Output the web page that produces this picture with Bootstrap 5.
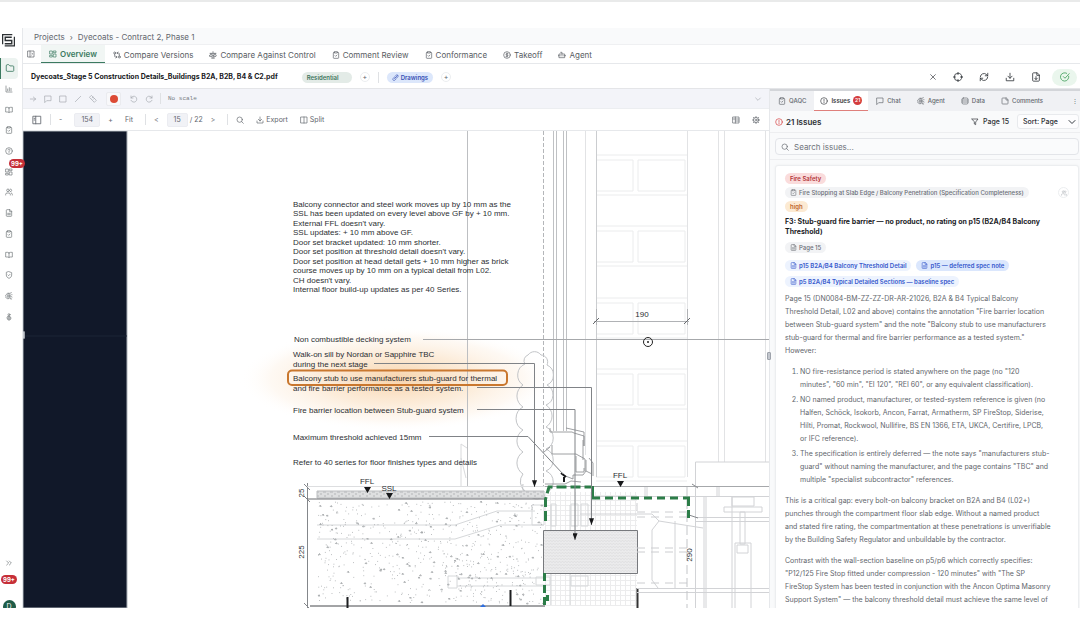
<!DOCTYPE html>
<html lang="en">
<head>
<meta charset="utf-8">
<meta name="viewport" content="width=device-width, initial-scale=1">
<title>Dyecoats - Contract 2, Phase 1</title>
<link href="https://cdn.jsdelivr.net/npm/bootstrap@5.3.0/dist/css/bootstrap.min.css" rel="stylesheet">
<style>
:root{--ink:#18191c;--soft:#62666d;--line:#e6e8eb;--pale:#f9fafb;--tool:#f3f4f9;--green:#3b7a60;--red:#d43d3d}
body{font-family:Inter,"Open Sans",sans-serif;font-size:7px;line-height:10px;color:var(--soft);background:#fff;border-top:2px solid #e9eaea}
button,input,select{font:inherit;color:inherit}
button{background:none;border:0;padding:0}
a{color:inherit;text-decoration:none}
.ic{width:8px;height:8px;flex:none;fill:none;stroke:currentColor;stroke-width:2;stroke-linecap:round;stroke-linejoin:round;display:block}
.ic-lg{width:10px;height:10px}
.shell{height:calc(100vh - 24px);padding-top:26px}
.crumbs,.tabs,.titlebar,.tools,.view,.stabs,.ihead,.find{flex:none}
.rail{width:22px;flex:none;color:#6d7276;position:relative;z-index:1;overflow-x:visible;overflow-y:clip;padding-top:6px}
.rail-logo{width:13px;height:13px;flex:none;margin:0 0 11px 2px}
.rail-nav{height:269px}
.rail-nav a{flex:1;width:18px;display:flex;align-items:center;justify-content:center;position:relative}
.rail-nav .on{background:#ecf3f0;border-left:1px solid var(--green);color:var(--green);border-radius:0 4px 4px 0}
.rail-foot{width:18px;margin-bottom:-5px}
.pill-red{background:#c62f38;color:#fff;border-radius:6px;font-size:6px;line-height:9px;font-weight:700;padding:0 2px}
.pill-over{position:absolute;left:9px;top:-2px}
.avatar{width:13px;height:13px;border-radius:50%;background:#1f5c48;color:#fff;line-height:13px;text-align:center}
.main{border-left:1px solid var(--line)}
.crumbs{height:17px;background:var(--pale);border-bottom:1px solid #eff0f2;padding:1px 0 0 11px;font-size:8px;gap:5px}
.tabs{height:19px;border-bottom:1px solid var(--line);padding-left:4px;font-size:8px;color:#585c62}
.tabs .tb{padding:1px 8px 0;gap:3px;height:18px;display:flex;align-items:center}
.tabs .on{background:#f1f6f4;color:var(--green);font-weight:600;border-bottom:1px solid var(--green);margin-left:6px}
.titlebar{height:25px;padding:2px 3px 0 8px;border-bottom:1px solid #e4e5e8}
.titlebar h1{font-size:7px;line-height:10px;font-weight:700;color:var(--ink);margin:0 16px 0 0}
.chip{border-radius:8px;font-size:6px;line-height:11px;padding:0 5px;font-weight:600;display:inline-flex;align-items:center;gap:2px;white-space:nowrap}
.chip .ic{width:7px;height:7px}
.chip-res{background:#e3ebe7;color:#3f765e;width:50px}
.chip-draw{background:#dce7fb;color:#3450b5}
.plus{width:10px;height:10px;border:1px solid #eceef0;border-radius:50%;line-height:8px;text-align:center}
.vr1{width:1px;height:11px;background:#dfe1e4;flex:none}
.actions{gap:16px;color:#33373c}
.okbtn{width:25px;height:17px;margin-left:-5px;border-radius:9px;background:#eaf6ed;color:#43a05d;display:flex;align-items:center;justify-content:center}
.tools{height:20px;background:var(--tool);border-bottom:1px solid #eceef1;color:#a3a7ae;padding:0 7px 0 6px;gap:7px}
.tools .rec{width:15px;height:14px;margin:0 2px;background:#f8f8fa;border:1px solid #eaebef;border-radius:2px;display:flex;align-items:center;justify-content:center}
.tools .rec::before{content:"";width:8px;height:8px;border-radius:50%;background:#dc4a35}
.mono{font-family:"Liberation Mono",monospace;font-size:6px;color:#777b82}
.view{height:22px;border-bottom:1px solid var(--line);padding:0 9px;white-space:nowrap}
.pair{display:flex;align-items:center;gap:2px}
.box{background:#f1f2f6;border:1px solid #ebecf1;border-radius:2px;height:14px;text-align:center;padding:0}
.box-zoom{width:26px}.box-page{width:21px}
.stage{flex:1;min-height:0;position:relative;overflow:hidden}
.stage svg.sheet{display:block;width:100%;height:100%}
.grip{position:absolute;width:4px;height:8px;background:#c3c7ce;border:1px solid #9ea3ab;border-radius:1px}
.grip-l{left:-2px;top:42%}.grip-r{left:-3px;top:56%;margin-top:-28px}
.side{width:311px;flex:none;border-left:1px solid var(--line);background:var(--pale);min-height:0}
.stabs{height:22px;background:#f0f1f4;border-top:2px solid #d3d5d9;padding-right:2px;font-size:6px;font-weight:500;white-space:nowrap}
.stabs .tb{display:flex;align-items:center;gap:3px;height:20px;padding:0 8px}
.stabs .on{background:#fff;color:#3b3e43;font-weight:600;border-bottom:1px solid #df7f7b;padding:0 6px}
.count{background:var(--red);color:#fff;width:9px;height:9px;border-radius:50%;font-size:5px;line-height:9px;text-align:center}
.ihead{height:22px;border-bottom:1px solid #edeef0;padding:0 1px 0 5px;color:#2b2e33;font-weight:500}
.ihead h2{font-size:8px;line-height:10px;font-weight:600;margin:0}
.ihead .warn{color:#d43d3d;margin-right:3px}
.sort{width:62px;height:15px;font-size:7px;line-height:10px;padding:0 12px 0 5px;border:1px solid #e8eaed;border-radius:3px;background-color:#fdfdfe;background-position:right 2px center;background-size:8px;font-weight:500;color:#2b2e33}
.find{height:27px;border-bottom:1px solid #edeef0;padding:5px 1px 5px 5px}
.find .wrap{position:relative;height:17px}
.find .ic{position:absolute;left:6px;top:5px}
.find input{height:17px;min-height:0;font-size:8px;line-height:10px;padding:0 0 0 18px;border:1px solid #e3e5e9;border-radius:4px;background:#fafbfc;color:var(--soft)}
.find input::placeholder{color:#6f747b}
.feed{flex:1;min-height:0;overflow:hidden;padding:5px 1px 0 5px}
.issue{background:#fff;border:1px solid #eceef0;border-radius:3px;padding:7px 9px 20px;box-shadow:0 0 3px #0000000d;color:#62666c}
.issue .meta{display:flex;justify-content:space-between;margin-bottom:3px}
.issue h3{font-size:7px;line-height:10px;font-weight:700;color:#1b1c1f;margin:5px 15px 5px 0}
.issue .refs{display:flex;flex-wrap:wrap;gap:5px;margin:7px 0 5px}
.issue p{line-height:13px;margin:0 0 8px}
.issue ol{line-height:13px;padding-left:15px;margin:0 0 8px}
.issue li{margin-bottom:2px}
.c-red{background:#fadcdc;color:#b3353a}
.c-grey{background:#f2f3f5;color:#6a6e75;font-weight:500}
.c-amber{background:#fcead3;color:#c0672c}
.c-blue{background:#edf3fe;color:#3558cc}
.c-blue2{background:#dbe7fd;color:#3558cc}
.who{width:11px;height:11px;border:1px solid #eceef0;border-radius:50%;display:flex;align-items:center;justify-content:center;color:#a9adb2}
.who .ic{width:6px;height:6px}
.note{font-family:"Liberation Sans",Arial,sans-serif;font-size:8px;fill:#2c2f33}
</style>
</head>
<body>
<svg class="d-none" aria-hidden="true">
<symbol id="folder" viewBox="0 0 24 24"><path d="M3 6a2 2 0 0 1 2-2h4l3 3h7a2 2 0 0 1 2 2v9a2 2 0 0 1-2 2H5a2 2 0 0 1-2-2z"/></symbol>
<symbol id="chart" viewBox="0 0 24 24"><path d="M3 3v18h18M8 17v-5M13 17V8M18 17v-7"/></symbol>
<symbol id="book" viewBox="0 0 24 24"><path d="M12 6v14M12 6c-1-1-2-2-4-2H2v14h6c2 0 3 1 4 2 1-1 2-2 4-2h6V4h-6c-2 0-3 1-4 2z"/></symbol>
<symbol id="clip" viewBox="0 0 24 24"><path d="M8 4H6a2 2 0 0 0-2 2v14a2 2 0 0 0 2 2h12a2 2 0 0 0 2-2V6a2 2 0 0 0-2-2h-2M8 2h8v4H8zM9 14l2 2 4-4"/></symbol>
<symbol id="help" viewBox="0 0 24 24"><circle cx="12" cy="12" r="10"/><path d="M9 9a3 3 0 1 1 4 3c-1 .5-1 1-1 2M12 17v.1"/></symbol>
<symbol id="grid" viewBox="0 0 24 24"><path d="M3 3h7v9H3zM14 3h7v5h-7zM14 12h7v9h-7zM3 16h7v5H3z"/></symbol>
<symbol id="users" viewBox="0 0 24 24"><circle cx="9" cy="7" r="4"/><path d="M2 21v-2a4 4 0 0 1 4-4h6a4 4 0 0 1 4 4v2M16 3a4 4 0 0 1 0 8M22 21v-2a4 4 0 0 0-3-4"/></symbol>
<symbol id="file" viewBox="0 0 24 24"><path d="M14 2H6a2 2 0 0 0-2 2v16a2 2 0 0 0 2 2h12a2 2 0 0 0 2-2V8zM14 2v6h6M8 13h8M8 17h8"/></symbol>
<symbol id="fileup" viewBox="0 0 24 24"><path d="M14 2H6a2 2 0 0 0-2 2v16a2 2 0 0 0 2 2h12a2 2 0 0 0 2-2V8zM14 2v6h6M12 11v7M9 15l3 3 3-3"/></symbol>
<symbol id="note" viewBox="0 0 24 24"><path d="M15 3H5a2 2 0 0 0-2 2v14a2 2 0 0 0 2 2h14a2 2 0 0 0 2-2V9zM15 3v6h6"/></symbol>
<symbol id="shield" viewBox="0 0 24 24"><path d="M12 2l8 3v7c0 5-3 8-8 10-5-2-8-5-8-10V5zM9 12l2 2 4-4"/></symbol>
<symbol id="brain" viewBox="0 0 24 24"><path d="M11 4a4 4 0 0 0-6 3 4 4 0 0 0-2 6 4 4 0 0 0 3 6 4 4 0 0 0 5 1zM11 4h4l4-2M11 12h5M15 8v12l5 1M8 8v8M20 8h1M19 14l2 1"/></symbol>
<symbol id="worker" viewBox="0 0 24 24"><circle cx="12" cy="5" r="3"/><path d="M9 10h6l3 5a6 6 0 0 1-12 0zM8 15h8M12 10v11"/></symbol>
<symbol id="panel" viewBox="0 0 24 24"><path d="M3 3h18v18H3zM9 3v18M14 9l3 3-3 3"/></symbol>
<symbol id="split" viewBox="0 0 24 24"><path d="M3 3h18v18H3zM12 3v18"/></symbol>
<symbol id="side" viewBox="0 0 24 24"><path d="M3 3h18v18H3zM9 3v18M5 8h2M5 12h2"/></symbol>
<symbol id="table" viewBox="0 0 24 24"><path d="M3 3h18v18H3zM3 9h18M10 3v18M10 15h11"/></symbol>
<symbol id="compare" viewBox="0 0 24 24"><circle cx="5" cy="6" r="3"/><circle cx="19" cy="18" r="3"/><path d="M12 6h5a2 2 0 0 1 2 2v7M15 9l-3-3 3-3M12 18H7a2 2 0 0 1-2-2V9M9 15l3 3-3 3"/></symbol>
<symbol id="scale" viewBox="0 0 24 24"><path d="M12 2v20M7 21h10M3 7h18M2 15l4-8 4 8a5 5 0 0 1-8 0zM14 15l4-8 4 8a5 5 0 0 1-8 0z"/></symbol>
<symbol id="dollar" viewBox="0 0 24 24"><circle cx="12" cy="12" r="10"/><path d="M15 8h-4a2 2 0 0 0 0 4h2a2 2 0 0 1 0 4H9M12 6v12"/></symbol>
<symbol id="bot" viewBox="0 0 24 24"><path d="M4 9h16v11H4zM12 9V4H8M1 14h3M20 14h3M9 13v2M15 13v2"/></symbol>
<symbol id="link" viewBox="0 0 24 24"><path d="M10 14l9-9M8 11l-4 4a4 4 0 0 0 6 6l4-4M10 8l4-4a4 4 0 0 1 6 6l-4 4M9 16l6-6"/></symbol>
<symbol id="x" viewBox="0 0 24 24"><path d="M5 5l14 14M19 5L5 19"/></symbol>
<symbol id="target" viewBox="0 0 24 24"><circle cx="12" cy="12" r="9"/><path d="M12 1v5M12 18v5M1 12h5M18 12h5"/></symbol>
<symbol id="refresh" viewBox="0 0 24 24"><path d="M3 12a9 9 0 0 1 15-6l3 3M21 3v6h-6M21 12a9 9 0 0 1-15 6l-3-3M3 21v-6h6"/></symbol>
<symbol id="down" viewBox="0 0 24 24"><path d="M12 3v12M7 10l5 5 5-5M3 15v6h18v-6"/></symbol>
<symbol id="ok" viewBox="0 0 24 24"><path d="M21 10a10 10 0 1 1-5-7M8 11l4 4L22 4"/></symbol>
<symbol id="arrow" viewBox="0 0 24 24"><path d="M4 12h16M13 6l7 6-7 6"/></symbol>
<symbol id="chat" viewBox="0 0 24 24"><path d="M3 3h18v14H8l-5 5z"/></symbol>
<symbol id="square" viewBox="0 0 24 24"><path d="M3 3h18v18H3z"/></symbol>
<symbol id="slash" viewBox="0 0 24 24"><path d="M4 20L20 4"/></symbol>
<symbol id="ruler" viewBox="0 0 24 24"><path d="M8 2l14 14-6 6L2 8zM9 9l3-3M13 13l3-3"/></symbol>
<symbol id="undo" viewBox="0 0 24 24"><path d="M3 3v6h6M3 9a9 9 0 1 1 0 7"/></symbol>
<symbol id="redo" viewBox="0 0 24 24"><path d="M21 3v6h-6M21 9a9 9 0 1 0 0 7"/></symbol>
<symbol id="chev" viewBox="0 0 24 24"><path d="M5 9l7 7 7-7"/></symbol>
<symbol id="search" viewBox="0 0 24 24"><circle cx="11" cy="11" r="8"/><path d="M17 17l5 5"/></symbol>
<symbol id="gear" viewBox="0 0 24 24"><circle cx="12" cy="12" r="3"/><circle cx="12" cy="12" r="8"/><path d="M12 1v3M12 20v3M1 12h3M20 12h3M4 4l2 2M18 18l2 2M20 4l-2 2M4 20l2-2"/></symbol>
<symbol id="alert" viewBox="0 0 24 24"><circle cx="12" cy="12" r="10"/><path d="M12 7v6M12 16v1"/></symbol>
<symbol id="data" viewBox="0 0 24 24"><rect x="3" y="3" width="18" height="18" rx="4"/><path d="M3 9h18M3 15h18"/></symbol>
<symbol id="filter" viewBox="0 0 24 24"><path d="M3 3h18l-7 9v8l-4-2v-6z"/></symbol>
</svg>

<div class="shell d-flex">
  <aside class="rail d-flex flex-column">
    <svg class="rail-logo" viewBox="0 0 24 24" fill="none" stroke="#2d3134" stroke-width="2.6"><path d="M1 19V1h18M5 22h18V5M18 6H6v6h12v6H5"/></svg>
    <nav class="rail-nav d-flex flex-column" aria-label="Primary">
      <a class="on" href="#" aria-label="Projects"><svg class="ic ic-lg"><use href="#folder"/></svg></a>
      <a href="#" aria-label="Reports"><svg class="ic"><use href="#chart"/></svg></a>
      <a href="#" aria-label="Library"><svg class="ic"><use href="#book"/></svg></a>
      <a href="#" aria-label="Checks"><svg class="ic"><use href="#clip"/></svg></a>
      <a href="#" aria-label="Help"><svg class="ic"><use href="#help"/></svg></a>
      <a href="#" aria-label="Dashboard"><svg class="ic"><use href="#grid"/></svg><span class="pill-red pill-over">99+</span></a>
      <a href="#" aria-label="People"><svg class="ic"><use href="#users"/></svg></a>
      <a href="#" aria-label="Documents"><svg class="ic"><use href="#file"/></svg></a>
      <a href="#" aria-label="Reviews"><svg class="ic"><use href="#clip"/></svg></a>
      <a href="#" aria-label="Standards"><svg class="ic"><use href="#book"/></svg></a>
      <a href="#" aria-label="Compliance"><svg class="ic"><use href="#shield"/></svg></a>
      <a href="#" aria-label="Agent"><svg class="ic"><use href="#brain"/></svg></a>
      <a href="#" aria-label="Site"><svg class="ic"><use href="#worker"/></svg></a>
    </nav>
    <div class="rail-foot mt-auto d-flex flex-column align-items-center">
      <button type="button" class="mb-1" aria-label="Expand"><svg class="ic" viewBox="0 0 24 24"><path d="M5 6l6 6-6 6M13 6l6 6-6 6"/></svg></button>
      <span class="pill-red mt-1">99+</span>
      <div class="avatar mt-3">D</div>
    </div>
  </aside>

  <main class="main d-flex flex-column flex-grow-1 overflow-hidden">
    <nav class="crumbs d-flex align-items-center" aria-label="Breadcrumb"><a href="#">Projects</a><span>›</span><a href="#">Dyecoats - Contract 2, Phase 1</a></nav>
    <nav class="tabs d-flex align-items-center" aria-label="Sections">
      <button type="button" aria-label="Toggle panel"><svg class="ic"><use href="#panel"/></svg></button>
      <a class="tb on" href="#"><svg class="ic"><use href="#grid"/></svg>Overview</a>
      <a class="tb" href="#"><svg class="ic"><use href="#compare"/></svg>Compare Versions</a>
      <a class="tb" href="#"><svg class="ic"><use href="#scale"/></svg>Compare Against Control</a>
      <a class="tb" href="#"><svg class="ic"><use href="#clip"/></svg>Comment Review</a>
      <a class="tb" href="#"><svg class="ic"><use href="#clip"/></svg>Conformance</a>
      <a class="tb" href="#"><svg class="ic"><use href="#dollar"/></svg>Takeoff</a>
      <a class="tb" href="#"><svg class="ic"><use href="#bot"/></svg>Agent</a>
    </nav>
    <header class="titlebar d-flex align-items-center gap-2">
      <h1>Dyecoats_Stage 5 Construction Details_Buildings B2A, B2B, B4 &amp; C2.pdf</h1>
      <span class="chip chip-res">Residential</span>
      <button type="button" class="plus" aria-label="Add tag">+</button>
      <span class="vr1"></span>
      <span class="chip chip-draw"><svg class="ic"><use href="#link"/></svg>Drawings</span>
      <button type="button" class="plus" aria-label="Add type">+</button>
      <div class="actions d-flex align-items-center ms-auto">
        <button type="button" aria-label="Close"><svg class="ic"><use href="#x"/></svg></button>
        <button type="button" aria-label="Locate"><svg class="ic ic-lg"><use href="#target"/></svg></button>
        <button type="button" aria-label="Refresh"><svg class="ic ic-lg"><use href="#refresh"/></svg></button>
        <button type="button" aria-label="Download"><svg class="ic ic-lg"><use href="#down"/></svg></button>
        <button type="button" aria-label="Export file"><svg class="ic ic-lg"><use href="#fileup"/></svg></button>
        <button type="button" class="okbtn" aria-label="Approve"><svg class="ic ic-lg"><use href="#ok"/></svg></button>
      </div>
    </header>

    <div class="d-flex flex-grow-1 overflow-hidden">
      <section class="d-flex flex-column flex-grow-1 overflow-hidden">
        <div class="tools d-flex align-items-center" role="toolbar" aria-label="Markup">
          <button type="button" aria-label="Arrow"><svg class="ic"><use href="#arrow"/></svg></button>
          <button type="button" aria-label="Comment"><svg class="ic"><use href="#chat"/></svg></button>
          <button type="button" aria-label="Rectangle"><svg class="ic"><use href="#square"/></svg></button>
          <button type="button" aria-label="Line"><svg class="ic"><use href="#slash"/></svg></button>
          <button type="button" aria-label="Measure"><svg class="ic"><use href="#ruler"/></svg></button>
          <button type="button" class="rec" aria-label="Colour"></button>
          <button type="button" aria-label="Undo"><svg class="ic"><use href="#undo"/></svg></button>
          <button type="button" aria-label="Redo"><svg class="ic"><use href="#redo"/></svg></button>
          <span class="vr1"></span><span class="mono">No scale</span>
          <button type="button" class="ms-auto" aria-label="Collapse"><svg class="ic"><use href="#chev"/></svg></button>
        </div>
        <div class="view d-flex align-items-center gap-2" role="toolbar" aria-label="View">
          <button type="button" aria-label="Thumbnails"><svg class="ic ic-lg"><use href="#side"/></svg></button>
          <span class="vr1"></span>
          <button type="button" aria-label="Zoom out">-</button>
          <input class="box box-zoom ms-1" value="154" aria-label="Zoom">
          <button type="button" aria-label="Zoom in">+</button>
          <button type="button" class="ms-1">Fit</button>
          <span class="vr1 ms-1"></span>
          <button type="button" aria-label="Previous">&lt;</button>
          <span class="pair"><input class="box box-page" value="15" aria-label="Page"><span>/ 22</span></span>
          <button type="button" aria-label="Next">&gt;</button>
          <span class="vr1 ms-1"></span>
          <button type="button" aria-label="Search"><svg class="ic"><use href="#search"/></svg></button>
          <button type="button" class="pair ms-1"><svg class="ic"><use href="#down"/></svg>Export</button>
          <button type="button" class="pair ms-1"><svg class="ic"><use href="#split"/></svg>Split</button>
          <button type="button" class="ms-auto me-1" aria-label="Layout"><svg class="ic"><use href="#table"/></svg></button>
          <button type="button" aria-label="Settings"><svg class="ic"><use href="#gear"/></svg></button>
        </div>
        <div class="stage">
          <svg class="sheet" viewBox="23 131 746 477" preserveAspectRatio="xMinYMin slice" fill="none" stroke="#8b8e92">
            <defs>
              <radialGradient id="glow"><stop offset="0" stop-color="#f5c189" stop-opacity=".7"/><stop offset=".5" stop-color="#f8d3a8" stop-opacity=".42"/><stop offset=".8" stop-color="#fbe6cf" stop-opacity=".25"/><stop offset="1" stop-color="#fff" stop-opacity="0"/></radialGradient>
              <pattern id="mesh" width="5" height="5" patternUnits="userSpaceOnUse"><path d="M0 .5H5M.5 0V5" stroke="#ececed"/></pattern>
              <pattern id="weave" width="3" height="3" patternUnits="userSpaceOnUse"><path d="M0 0H3V3H0z" fill="#ebebec" stroke="none"/><path d="M0 1.500l1.500-1 1.500 1" stroke="#d6d7d8" stroke-width=".6"/></pattern>
              <pattern id="screed" width="7" height="7" patternUnits="userSpaceOnUse"><path d="M0 0H7V7H0z" fill="#dedfe0" stroke="none"/><path d="M1 2h3M5 4h2M2 6h2" stroke="#a9abae" stroke-width=".8"/></pattern>
              <g id="course" stroke="#ebeced"><path d="M596 0H687M596 40H687M596 5h37v31h-37M638 5h47v31h-47z"/></g>
              <marker id="tip" viewBox="0 0 6 8" markerWidth="5" markerHeight="8" refX="3" refY="8" markerUnits="userSpaceOnUse"><path d="M0 0H6L3 8z" fill="#17181a" stroke="none"/></marker>
            </defs>
            <path d="M23 131H127V608H23z" fill="#111829" stroke="#aeb3ba"/>
            <path d="M23 336H127" stroke="#1d2436"/>
            <ellipse cx="397" cy="379" rx="158" ry="52" fill="url(#glow)" stroke="none"/>

            <!-- wall courses and studs -->
            <use href="#course" y="155"/><use href="#course" y="226"/><use href="#course" y="298"/><use href="#course" y="369"/><use href="#course" y="441"/>
            <path d="M585.500 131V455M687.500 131V477M718.500 131V462M724.500 131V462M765.500 131V462" stroke="#e2e3e5"/>
            <path d="M596.500 131V477" stroke="#cbcdd0"/>
            <path d="M553.500 131V431M556.500 131V431M563.500 131V431M566.500 131V431" stroke="#bfc1c4"/>
            <path d="M543.500 131V486" stroke="#b4b6b9" stroke-dasharray="4 2"/>
            <path d="M467.500 131V487" stroke="#bdbfc2"/>
            <path d="M461 487V444l6 4M461 458l5 20" stroke="#d9dadc"/>
            <path d="M423 339.500H769" stroke="#a6a8ab"/>

            <!-- dimension 190 -->
            <path d="M594 321.500H689M596.500 309V325M687.500 309V325" stroke="#b0b2b5"/><path d="M593 324l6-6M684 324l6-6" stroke="#66696d"/>
            <circle cx="648" cy="342" r="4.500" stroke="#222"/><circle cx="648" cy="342" r="1" fill="#222" stroke="none"/>

            <!-- insulation cloud -->
            <path stroke="#c2c4c7" d="M525 364a6 6 0 0 1 3-9a8 8 0 0 1 13 0a7 7 0 0 1 6 10a11 11 0 0 1 0 20a11 11 0 0 1-1 20a13 13 0 0 1 0 22a12 12 0 0 1 0 22a12 12 0 0 1 0 22a12 12 0 0 1 0 22a10 10 0 0 1-15 4a10 10 0 0 1-8-13M525 364a12 12 0 0 0-2 21a13 13 0 0 0 0 22a13 13 0 0 0 0 23a13 13 0 0 0 0 22a13 13 0 0 0 0 22a12 12 0 0 0 2 17"/>

            <!-- slab -->
            <path d="M307.500 483V608M304 484l6 6M304 496l6 6M304 603l6 6" stroke="#84878b"/>
            <path d="M307 486.500H545" stroke="#dddee0"/>
            <path d="M317 491H544V498H317z" fill="url(#screed)" stroke="#bcbec0"/>
            <path d="M307 499H544" stroke="#6a6d71"/>
            <path d="M317 525H455L497 511H535M317 539H455L500 525H544M448 576h9v12h-9zM457 578H544M457 586H544M532 505h12v20h-12z" stroke="#d6d8da"/>
            <path id="stipple" stroke="#a6a9ac" stroke-width=".9"/>
            <path d="M310 606H545" stroke="#46494d"/>
            <path d="M347.500 597V608M510.500 590V606" stroke="#1d1e20" stroke-width="2"/>
            <path d="M480 607l3-3 3 3z" fill="#2f6fe0" stroke="none"/>

            <!-- junction -->
            <path d="M545 492H637V530H545zM545 573H637V606H545z" fill="url(#mesh)" stroke="none"/>
            <path d="M551 504h5v22h-5zM571 504h7v22h-7zM581 504h7v22h-7zM536 577h14v8h-14zM571 576h17v10h-17zM551 505v100M570 505v100" stroke="#d6d8da"/>
            <path d="M543.500 530.500H637.500V573.500H543.500z" fill="url(#weave)" stroke="#77797d"/>
            <path d="M637.500 588V608" stroke="#333" stroke-width="2"/>
            <path d="M550 428v4h22l2 1 10 3v10M566 428l18 4v14M552 445v9h24l9 5v12M583 440v20M550 447l-6 5M576 456v16h8v-4M586 460v11M589 458l4 5v13M563 475l10 4v-4h10l3-4 6 3M545 484h20l6-3 10 1" stroke="#85888c" stroke-width=".8"/>
            <path d="M561 473l5 4M564 477v5" stroke="#17181a" stroke-width="2"/>

            <!-- floor build-up and ceiling -->
            <path d="M545 486.500H769" stroke="#a6a8ab"/>
            <path d="M695.500 608V462H769M594 496.500H769M704 496V608M706 496V608M732 496V608M695 517.500H769M695 521.500H769M637 588.500H769M637 592.500H769M645 487v9M647 487v9M717 487v9M719 487v9M732 497h22v9h-22zM724 507h38v5h-38zM740 512h5v32h-5zM737 545h11v8h-11zM735 608V543h16V608" stroke="#d2d3d6"/>
            <path d="M580 514H652l7 7 44 7M659 521l-7 9v50l6 8M675 521V588" stroke="#d2d3d6"/>
            <path d="M637 512H687M637 517H687M637 548H687M637 552H687M637 583H687M637 503V514" stroke="#cccdd0" stroke-dasharray="8 6"/>
            <path d="M687 487V608" stroke="#c3c5c8" stroke-dasharray="9 4"/>
            <path d="M692 484l6 4M689 515l9 3" stroke="#85888c"/>

            <!-- fire line -->
            <g stroke="#2c7d48" stroke-width="3"><path d="M545.500 521V499L549 487H592" stroke-dasharray="10 4"/><path d="M592.500 486V498"/><path d="M592 498H690" stroke-dasharray="8 5"/><path d="M688.500 498V518" stroke-dasharray="8 4"/><path d="M544.500 573V608" stroke-dasharray="8 4"/><path d="M547.500 595V601"/></g>

            <!-- leaders -->
            <g stroke="#808387"><path d="M374 363.500H534.500V487" marker-end="url(#tip)"/><path d="M477 387.500H591.500V525" marker-end="url(#tip)"/><path d="M477 409.500H575V540" marker-end="url(#tip)"/><path d="M429 436.500H528L563 474"/></g>
            <path d="M364 487h7l-3.500 6zM386 493h7l-3.500 6zM617 481h7l-3.500 6z" fill="#17181a" stroke="none"/>

            <g class="note" stroke="none">
              <text x="293" y="207">Balcony connector and steel work moves up by 10 mm as the</text>
              <text x="293" y="216">SSL has been updated on every level above GF by + 10 mm.</text>
              <text x="293" y="226">External FFL doesn't vary.</text>
              <text x="293" y="235">SSL updates: + 10 mm above GF.</text>
              <text x="293" y="245">Door set bracket updated: 10 mm shorter.</text>
              <text x="293" y="254">Door set position at threshold detail doesn't vary.</text>
              <text x="293" y="264">Door set position at head detail gets + 10 mm higher as brick</text>
              <text x="293" y="273">course moves up by 10 mm on a typical detail from L02.</text>
              <text x="293" y="283">CH doesn't vary.</text>
              <text x="293" y="292">Internal floor build-up updates as per 40 Series.</text>
              <text x="294" y="342">Non combustible decking system</text>
              <text x="293" y="357">Walk-on sill by Nordan or Sapphire TBC</text>
              <text x="293" y="367">during the next stage</text>
              <text x="293" y="381">Balcony stub to use manufacturers stub-guard for thermal</text>
              <text x="293" y="391">and fire barrier performance as a tested system.</text>
              <text x="293" y="413">Fire barrier location between Stub-guard system</text>
              <text x="293" y="440">Maximum threshold achieved 15mm</text>
              <text x="293" y="465">Refer to 40 series for floor finishes types and details</text>
              <g text-anchor="middle">
                <text x="642" y="317">190</text><text x="367" y="484">FFL</text><text x="389" y="491">SSL</text><text x="620" y="478">FFL</text>
                <text transform="translate(304 493) rotate(-90)">25</text>
                <text transform="translate(304 552) rotate(-90)">225</text>
                <text transform="translate(692 555) rotate(-90)">290</text>
              </g>
            </g>
            <rect x="288" y="370.500" width="219" height="14.500" rx="4" stroke="#c9772e" stroke-width="2"/>
          </svg>
          <span class="grip grip-l"></span>
        </div>
      </section>

      <aside class="side d-flex flex-column position-relative">
        <span class="grip grip-r"></span>
        <nav class="stabs d-flex align-items-center" aria-label="Review">
          <a class="tb" href="#"><svg class="ic"><use href="#clip"/></svg>QAQC</a>
          <a class="tb on" href="#"><svg class="ic"><use href="#alert"/></svg>Issues<span class="count">21</span></a>
          <a class="tb" href="#"><svg class="ic"><use href="#chat"/></svg>Chat</a>
          <a class="tb" href="#"><svg class="ic"><use href="#brain"/></svg>Agent</a>
          <a class="tb" href="#"><svg class="ic"><use href="#data"/></svg>Data</a>
          <a class="tb" href="#"><svg class="ic"><use href="#note"/></svg>Comments</a>
          <button type="button" class="ms-auto" aria-label="More">⋮</button>
        </nav>
        <div class="ihead d-flex align-items-center">
          <svg class="ic warn"><use href="#alert"/></svg>
          <h2>21 Issues</h2>
          <button type="button" class="d-flex align-items-center gap-1 ms-auto me-2"><svg class="ic"><use href="#filter"/></svg>Page 15</button>
          <select class="form-select sort" aria-label="Sort"><option>Sort: Page</option></select>
        </div>
        <div class="find"><div class="wrap"><input class="form-control" type="search" placeholder="Search issues..." aria-label="Search issues"><svg class="ic"><use href="#search"/></svg></div></div>
        <div class="feed">
          <article class="issue">
            <div class="meta"><span class="chip c-red">Fire Safety</span></div>
            <div class="meta"><span class="chip c-grey"><svg class="ic"><use href="#clip"/></svg>Fire Stopping at Slab Edge / Balcony Penetration (Specification Completeness)</span><button type="button" class="who" aria-label="Assign"><svg class="ic"><use href="#users"/></svg></button></div>
            <div class="meta"><span class="chip c-amber">high</span></div>
            <h3>F3: Stub-guard fire barrier — no product, no rating on p15 (B2A/B4 Balcony Threshold)</h3>
            <div class="d-flex"><span class="chip c-grey"><svg class="ic"><use href="#file"/></svg>Page 15</span></div>
            <div class="refs">
              <a class="chip c-blue" href="#"><svg class="ic"><use href="#file"/></svg>p15 B2A/B4 Balcony Threshold Detail</a>
              <a class="chip c-blue2" href="#"><svg class="ic"><use href="#file"/></svg>p15 — deferred spec note</a>
              <a class="chip c-blue" href="#"><svg class="ic"><use href="#file"/></svg>p5 B2A/B4 Typical Detailed Sections — baseline spec</a>
            </div>
            <p>Page 15 (DN0084-BM-ZZ-ZZ-DR-AR-21026, B2A &amp; B4 Typical Balcony<br>Threshold Detail, L02 and above) contains the annotation "Fire barrier location<br>between Stub-guard system" and the note "Balcony stub to use manufacturers<br>stub-guard for thermal and fire barrier performance as a tested system."<br>However:</p>
            <ol>
              <li>NO fire-resistance period is stated anywhere on the page (no "120<br>minutes", "60 min", "EI 120", "REI 60", or any equivalent classification).</li>
              <li>NO named product, manufacturer, or tested-system reference is given (no<br>Halfen, Schöck, Isokorb, Ancon, Farrat, Armatherm, SP FireStop, Siderise,<br>Hilti, Promat, Rockwool, Nullifire, BS EN 1366, ETA, UKCA, Certifire, LPCB,<br>or IFC reference).</li>
              <li>The specification is entirely deferred — the note says "manufacturers stub-<br>guard" without naming the manufacturer, and the page contains "TBC" and<br>multiple "specialist subcontractor" references.</li>
            </ol>
            <p>This is a critical gap: every bolt-on balcony bracket on B2A and B4 (L02+)<br>punches through the compartment floor slab edge. Without a named product<br>and stated fire rating, the compartmentation at these penetrations is unverifiable<br>by the Building Safety Regulator and unbuildable by the contractor.</p>
            <p>Contrast with the wall-section baseline on p5/p6 which correctly specifies:<br>"P12/125 Fire Stop fitted under compression - 120 minutes" with "The SP<br>FireStop System has been tested in conjunction with the Ancon Optima Masonry<br>Support System" — the balcony threshold detail must achieve the same level of</p>
          </article>
        </div>
      </aside>
    </div>
  </main>
</div>
<script src="https://cdn.jsdelivr.net/npm/bootstrap@5.3.0/dist/js/bootstrap.bundle.min.js"></script>
<script>
// Concrete stipple: fixed seed keeps the slab texture stable between loads.
let seed = 7;
const rnd = () => (seed = (seed * 16807) % 2147483647) / 2147483647;
let d = "";
for (let i = 0; i < 680; i++) {
  const x = 318 + rnd() * 224, y = 502 + rnd() * 102;
  d += i % 7 ? `M${x.toFixed(1)} ${y.toFixed(1)}h.8` : `M${x.toFixed(1)} ${y.toFixed(1)}l1-1 .8 1.2z`;
}
document.getElementById("stipple").setAttribute("d", d);
</script>
</body>
</html>
